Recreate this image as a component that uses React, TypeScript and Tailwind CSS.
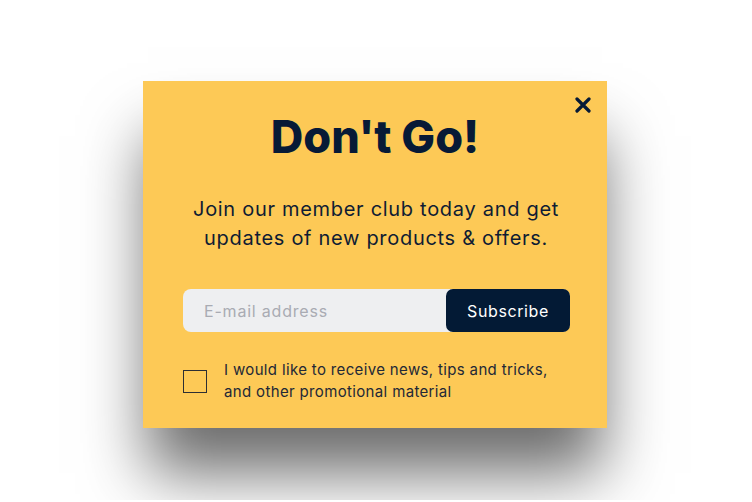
import React from "react";

export default function App() {
  return (
    <div
      className="h-[500px] w-full overflow-hidden bg-white flex justify-start pl-[143px] pt-[81px]"
      style={{ fontFamily: "Inter, 'Noto Sans', sans-serif" }}
    >
      <div className="relative w-[464px] h-[347px] bg-[#fdc956] shadow-[0_50px_60px_-5px_rgba(0,0,0,0.58)] flex flex-col items-center">
        <button className="absolute right-[16px] top-[16px] w-[16px] h-[16px] flex items-center justify-center text-[#071a36]">
          <svg width="16" height="16" viewBox="0 0 16 16">
            <path d="M2 2 L14 14 M14 2 L2 14" stroke="#071a36" strokeWidth="3.2" strokeLinecap="round" />
          </svg>
        </button>
        <h1 className="mt-[28px] text-[45px] leading-[56px] font-extrabold text-[#071a36] tracking-[0px]">
          Don't Go!
        </h1>
        <p className="mt-[30px] ml-[2px] text-[20px] leading-[29px] tracking-[0.7px] text-[#0f1c33] text-center">
          Join our member club today and get
          <br />
          updates of new products &amp; offers.
        </p>
        <div className="mt-[36px] self-start ml-[40px] w-[387px] h-[43px] flex bg-[#eeeff1] rounded-[8px]">
          <div className="flex-1 flex items-center pl-[21px] text-[16px] tracking-[0.8px] text-[#a9abb3]">
            E-mail address
          </div>
          <button className="w-[124px] h-full bg-[#031a35] rounded-[7px] text-white text-[16px] tracking-[0.6px]">
            Subscribe
          </button>
        </div>
        <div className="mt-[27px] self-start ml-[40px] w-[387px] flex items-start gap-[17px]">
          <div className="mt-[11px] w-[24px] h-[23px] border-[1.5px] border-[#2c2e33] shrink-0" />
          <div className="text-[15px] leading-[22px] tracking-[0.35px] text-[#232836]">
            I would like to receive news, tips and tricks,
            <br />
            and other promotional material
          </div>
        </div>
      </div>
    </div>
  );
}
